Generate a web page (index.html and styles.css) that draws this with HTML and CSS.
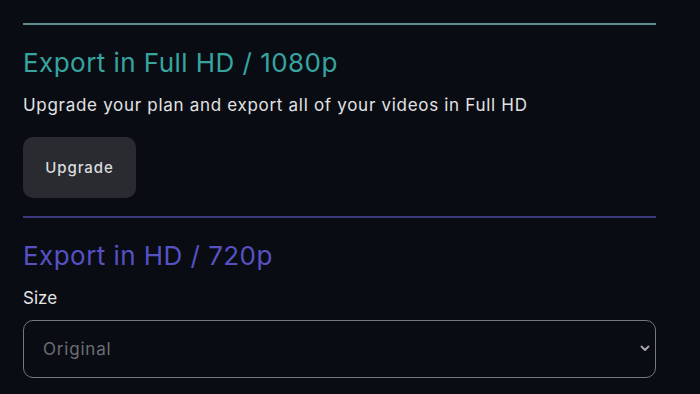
FILE: index.html
```html
<!DOCTYPE html>
<html lang="en">
<head>
<meta charset="utf-8">
<title>Export</title>
<link rel="stylesheet" href="styles.css">
</head>
<body>
<main class="panel">
  <section class="block block-full">
    <h2 class="title title-teal">Export in Full HD / 1080p</h2>
    <p class="desc">Upgrade your plan and export all of your videos in Full HD</p>
    <button class="btn" type="button">Upgrade</button>
  </section>
  <section class="block block-hd">
    <h2 class="title title-indigo">Export in HD / 720p</h2>
    <label class="label">Size</label>
    <div class="select">
      <span class="select-value">Original</span>
      <svg class="chevron" width="10" height="7" viewBox="0 0 10 7" aria-hidden="true">
        <path d="M1.5 1.5 L5 5 L8.5 1.5" fill="none" stroke="#a9abb0" stroke-width="1.8" stroke-linecap="round" stroke-linejoin="round"/>
      </svg>
    </div>
  </section>
</main>
</body>
</html>
```

FILE: styles.css
```css
html, body {
  margin: 0;
  padding: 0;
}
body {
  background: #0a0c13;
  font-family: Inter, "Liberation Sans", sans-serif;
  color: #e2e2e4;
  width: 700px;
  height: 394px;
  overflow: hidden;
}
.panel {
  padding: 23px 44px 0 23px;
}
.block {
  display: flex;
  flex-direction: column;
  align-items: flex-start;
  border-top: 2px solid transparent;
}
.block-full {
  border-top-color: #5e8c8c;
}
.block-hd {
  border-top-color: #3b3a80;
  margin-top: 18px;
}
.title {
  margin: 21.6px 0 0;
  font-size: 26px;
  line-height: 32px;
  font-weight: 400;
  letter-spacing: 0.45px;
}
.title-teal {
  color: #37a4a0;
}
.title-indigo {
  color: #5752c4;
}
.desc {
  margin: 14.7px 0 0;
  font-size: 17px;
  line-height: 24px;
  letter-spacing: 0.7px;
}
.btn {
  margin-top: 19.7px;
  width: 113px;
  height: 61px;
  border: none;
  border-radius: 10px;
  background: #2a2b31;
  color: #dcdcde;
  font-family: inherit;
  font-size: 15px;
  font-weight: 500;
  letter-spacing: 0.9px;
  padding: 0;
}
.label {
  margin-top: 14.2px;
  font-size: 17px;
  line-height: 24px;
  color: #e4e4e6;
}
.select {
  box-sizing: border-box;
  margin-top: 10.2px;
  width: 100%;
  height: 58px;
  border: 1.5px solid #75787f;
  border-radius: 10px;
  display: flex;
  align-items: center;
  justify-content: space-between;
  padding: 0 5px 0 19px;
}
.select-value {
  font-size: 17px;
  color: #6c6e75;
  letter-spacing: 0.8px;
}
.chevron {
  display: block;
}
```
